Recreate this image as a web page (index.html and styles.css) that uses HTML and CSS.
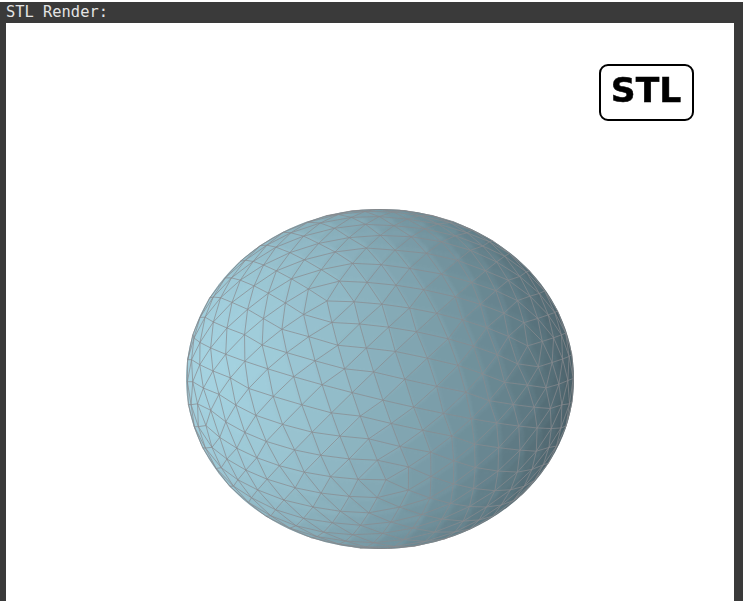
FILE: index.html
```html
<!DOCTYPE html>
<html lang="en">
<head>
<meta charset="utf-8">
<title>STL Render</title>
<link rel="stylesheet" href="styles.css">
</head>
<body>
<main class="panel">
  <header class="panel-title">STL Render:</header>
  <section class="viewer">
    <svg id="sphere" class="sphere" width="388" height="340" viewBox="-194 -170 388 340" role="img" aria-label="Rendered sphere mesh">
      <defs>
        <clipPath id="silhouette"><ellipse cx="0" cy="0" rx="194" ry="170"></ellipse></clipPath>
      </defs>
      <g clip-path="url(#silhouette)">
        <g id="facets" class="facets"></g>
      </g>
      <g id="edges" class="edges"></g>
      <ellipse class="outline" cx="0" cy="0" rx="193.6" ry="169.6"></ellipse>
    </svg>
    <div class="badge">STL</div>
  </section>
</main>
<script src="script.js"></script>
</body>
</html>
```

FILE: styles.css
```css
html, body {
  margin: 0;
  height: 100%;
  background: #fff;
}
body {
  padding-top: 2px;
  box-sizing: border-box;
  overflow: hidden;
}
.panel {
  height: 100%;
  display: flex;
  flex-direction: column;
  background: #3a3a3a;
  padding: 0 9px 0 6px;
  box-sizing: border-box;
}
.panel-title {
  height: 21px;
  line-height: 21px;
  font-family: "DejaVu Sans Mono", monospace;
  font-size: 15.4px;
  color: #e4e4e4;
  white-space: nowrap;
}
.viewer {
  position: relative;
  flex: 1;
  background: #fff;
  display: flex;
  justify-content: flex-start;
  align-items: flex-start;
  padding: 186px 0 0 180px;
  box-sizing: border-box;
}
.sphere {
  display: block;
  filter: blur(0.3px);
}
.facets {
  filter: blur(1.2px);
}
.edges polyline {
  stroke: rgba(136, 138, 142, 0.8);
  stroke-width: 0.9;
  fill: none;
}
.outline {
  fill: none;
  stroke: rgba(125, 128, 130, 0.4);
  stroke-width: 1;
}
.badge {
  position: absolute;
  left: 593px;
  top: 40.5px;
  width: 95px;
  height: 57px;
  padding: 0 1px 5px 0;
  box-sizing: border-box;
  border: 2.8px solid #000;
  border-radius: 9px;
  display: flex;
  align-items: center;
  justify-content: center;
  font-family: "DejaVu Sans", sans-serif;
  font-weight: 700;
  font-size: 34.5px;
  -webkit-text-stroke: 0.5px #000;
  color: #000;
  background: #fff;
  filter: blur(0.4px);
}
```

FILE: script.js
```js
(function () {
  var DEPTH = 3;
  var RX = 194, RY = 170;
  var EYE = 20;
  var SILHOUETTE = Math.sqrt(1 - 1 / (EYE * EYE)) / (EYE - 1 / EYE);
  // Model-space positions of two neighbouring 5-valent mesh vertices
  var TARGET_A = [-0.262, -0.44, 0.859];
  var TARGET_B = [0.033, 0.578, 0.815];
  var LIGHT = norm([-0.85, -0.05, 0.52]);
  var LIT = [164, 210, 224];
  var DARK = [66, 86, 94];
  var NS = 'http://www.w3.org/2000/svg';

  function norm(v) {
    var l = Math.hypot(v[0], v[1], v[2]);
    return [v[0] / l, v[1] / l, v[2] / l];
  }
  function dot(a, b) { return a[0] * b[0] + a[1] * b[1] + a[2] * b[2]; }
  function cross(a, b) { return [a[1] * b[2] - a[2] * b[1], a[2] * b[0] - a[0] * b[2], a[0] * b[1] - a[1] * b[0]]; }
  function frame(a, b) {
    var e1 = norm(a), d = dot(b, e1);
    var e2 = norm([b[0] - d * e1[0], b[1] - d * e1[1], b[2] - d * e1[2]]);
    return [e1, e2, cross(e1, e2)];
  }
  function lerp(a, b, t) { return [a[0] + (b[0] - a[0]) * t, a[1] + (b[1] - a[1]) * t, a[2] + (b[2] - a[2]) * t]; }
  function mid(a, b) { return norm([a[0] + b[0], a[1] + b[1], a[2] + b[2]]); }

  var p = (1 + Math.sqrt(5)) / 2;
  var V = [[-1,p,0],[1,p,0],[-1,-p,0],[1,-p,0],[0,-1,p],[0,1,p],[0,-1,-p],[0,1,-p],[p,0,-1],[p,0,1],[-p,0,-1],[-p,0,1]].map(norm);
  var F = [[0,11,5],[0,5,1],[0,1,7],[0,7,10],[0,10,11],[1,5,9],[5,11,4],[11,10,2],[10,7,6],[7,1,8],[3,9,4],[3,4,2],[3,2,6],[3,6,8],[3,8,9],[4,9,5],[2,4,11],[6,2,10],[8,6,7],[9,8,1]];

  var S = frame(V[0], V[5]);
  var T = frame(TARGET_A, TARGET_B);
  function rotate(v) {
    var a = dot(v, S[0]), b = dot(v, S[1]), c = dot(v, S[2]);
    return [
      a * T[0][0] + b * T[1][0] + c * T[2][0],
      a * T[0][1] + b * T[1][1] + c * T[2][1],
      a * T[0][2] + b * T[1][2] + c * T[2][2]
    ];
  }
  function project(q, grow) {
    var k = grow / ((EYE - q[2]) * SILHOUETTE);
    return (q[0] * k * RX).toFixed(2) + ',' + (q[1] * k * RY).toFixed(2);
  }

  var tris = [];
  function subdivide(a, b, c, depth) {
    if (depth === 0) {
      tris.push([rotate(a), rotate(b), rotate(c)]);
      return;
    }
    var ab = mid(a, b), bc = mid(b, c), ca = mid(c, a);
    subdivide(a, ab, ca, depth - 1);
    subdivide(ab, b, bc, depth - 1);
    subdivide(ca, bc, c, depth - 1);
    subdivide(ab, bc, ca, depth - 1);
  }
  F.forEach(function (f) { subdivide(V[f[0]], V[f[1]], V[f[2]], DEPTH); });

  var facets = document.getElementById('facets');
  var edges = document.getElementById('edges');
  var seen = {};
  function addEdge(a, b) {
    if (a[2] < 0.03 || b[2] < 0.03) return;
    var ka = project(a, 1), kb = project(b, 1), k = ka < kb ? ka + '|' + kb : kb + '|' + ka;
    if (seen[k]) return;
    seen[k] = true;
    var line = document.createElementNS(NS, 'polyline');
    line.setAttribute('points', ka + ' ' + kb);
    edges.appendChild(line);
  }
  tris.forEach(function (t) {
    var c = norm([t[0][0] + t[1][0] + t[2][0], t[0][1] + t[1][1] + t[2][1], t[0][2] + t[1][2] + t[2][2]]);
    if (c[2] < -0.1) return;
    var s = Math.max(0, (dot(c, LIGHT) + 0.8) / 1.8);
    var col = 'rgb(' + lerp(DARK, LIT, Math.pow(s, 1.05)).map(Math.round).join(',') + ')';
    var poly = document.createElementNS(NS, 'polygon');
    // The blurred fill layer is drawn slightly oversized; the silhouette clip trims it.
    poly.setAttribute('points', t.map(function (q) { return project(q, 1.03); }).join(' '));
    poly.setAttribute('fill', col);
    poly.setAttribute('stroke', col);
    poly.setAttribute('stroke-width', '0.8');
    facets.appendChild(poly);
    addEdge(t[0], t[1]);
    addEdge(t[1], t[2]);
    addEdge(t[2], t[0]);
  });
})();
```
